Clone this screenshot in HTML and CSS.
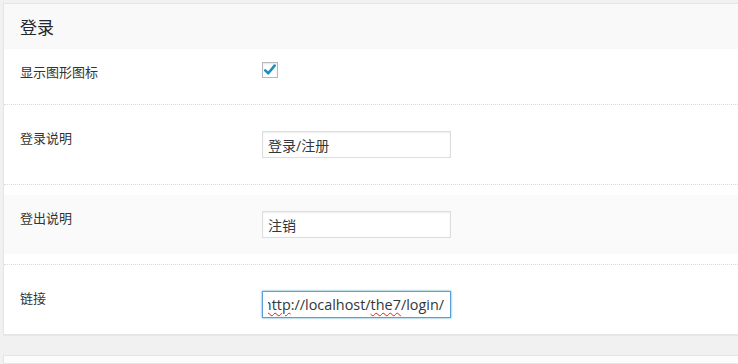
FILE: index.html
```html
<!DOCTYPE html>
<html lang="zh-CN">
<head>
<meta charset="utf-8">
<title>登录</title>
<link rel="stylesheet" href="styles.css">
</head>
<body>
<div class="panel">
  <div class="panel-head"><h3 class="panel-title">登录</h3></div>
  <div class="row row-first">
    <div class="row-inner">
      <div class="label">显示图形图标</div>
      <div class="field">
        <span class="checkbox"><svg width="14" height="14" viewBox="0 0 14 14"><path d="M2.2 7.4 L5.3 10.3 L11.6 2.6" fill="none" stroke="#1e8cbe" stroke-width="2.6" stroke-linecap="round" stroke-linejoin="round"/></svg></span>
      </div>
    </div>
  </div>
  <div class="row">
    <div class="row-inner">
      <div class="label">登录说明</div>
      <div class="field"><input class="text-input" type="text" value="登录/注册"></div>
    </div>
  </div>
  <div class="row">
    <div class="row-inner row-alt">
      <div class="label">登出说明</div>
      <div class="field"><input class="text-input" type="text" value="注销"></div>
    </div>
  </div>
  <div class="row row-last">
    <div class="row-inner">
      <div class="label">链接</div>
      <div class="field"><div class="text-input focused"><div class="clip"><span class="scroll-text"><span class="spell">http</span>://localhost/<span class="spell">the7</span>/login/</span></div></div></div>
    </div>
  </div>
</div>
<div class="panel panel-next"></div>
</body>
</html>
```
FILE: styles.css
```css
html, body {
  margin: 0;
  padding: 0;
}
body {
  background: #f1f1f1;
  padding: 3px 0 0 3px;
  font-family: "Open Sans", "Noto Sans CJK SC", sans-serif;
  font-size: 13px;
  color: #333;
  overflow: hidden;
  height: 364px;
  box-sizing: border-box;
}
.panel {
  background: #fff;
  border: 1px solid #e5e5e5;
  border-right: none;
  box-shadow: 0 1px 1px rgba(0,0,0,0.04);
}
.panel-head {
  background: #f9f9f9;
  height: 45px;
  display: flex;
  align-items: center;
  padding-left: 16px;
}
.panel-title {
  margin: 0;
  font-size: 17px;
  font-weight: normal;
  color: #23282d;
  line-height: 22px;
  padding-top: 3px;
}
.row {
  padding: 10px 0;
  border-bottom: 1px dotted #dcdcdc;
}
.row-inner {
  display: flex;
  padding: 14px 0 16px;
}
.row-alt {
  background: #fafafa;
}
.row-first {
  padding: 0;
}
.row-first .row-inner {
  padding: 14px 0 23px;
}
.row-first .field {
  padding-top: 0;
}
.row-last {
  border-bottom: none;
  padding-bottom: 0;
}
.label {
  width: 242px;
  padding-left: 16px;
  line-height: 18px;
  color: #333;
}
.field {
  padding-top: 2px;
}
.checkbox {
  display: flex;
  align-items: center;
  justify-content: center;
  width: 14px;
  height: 14px;
  border: 1px solid #b4b9be;
  background: #fff;
  box-shadow: inset 0 1px 2px rgba(0,0,0,0.1);
  margin-top: -1px;
}
.text-input {
  display: block;
  box-sizing: border-box;
  width: 189px;
  height: 27px;
  margin: 0;
  padding: 0 8px 0 5px;
  border: 1px solid #ddd;
  box-shadow: inset 0 1px 2px rgba(0,0,0,0.07);
  background: #fff;
  font-family: "Open Sans", "Noto Sans CJK SC", sans-serif;
  font-size: 14px;
  color: #32373c;
  outline: none;
}
.focused {
  border-color: #5b9dd9;
  box-shadow: 0 0 2px rgba(30,140,190,0.8);
  padding: 0 6px 0 5px;
}
.clip {
  overflow: hidden;
  white-space: nowrap;
  direction: rtl;
  text-align: right;
  line-height: 25px;
  height: 25px;
  font-size: 14.4px;
}
.scroll-text {
  display: inline-block;
  direction: ltr;
  unicode-bidi: isolate;
  vertical-align: top;
}
.spell {
  text-decoration: underline wavy #e0201e;
  text-decoration-thickness: 1px;
  text-underline-offset: 2px;
}
.panel-next {
  margin-top: 20px;
  height: 7px;
  background: #fcfcfc;
}
```
